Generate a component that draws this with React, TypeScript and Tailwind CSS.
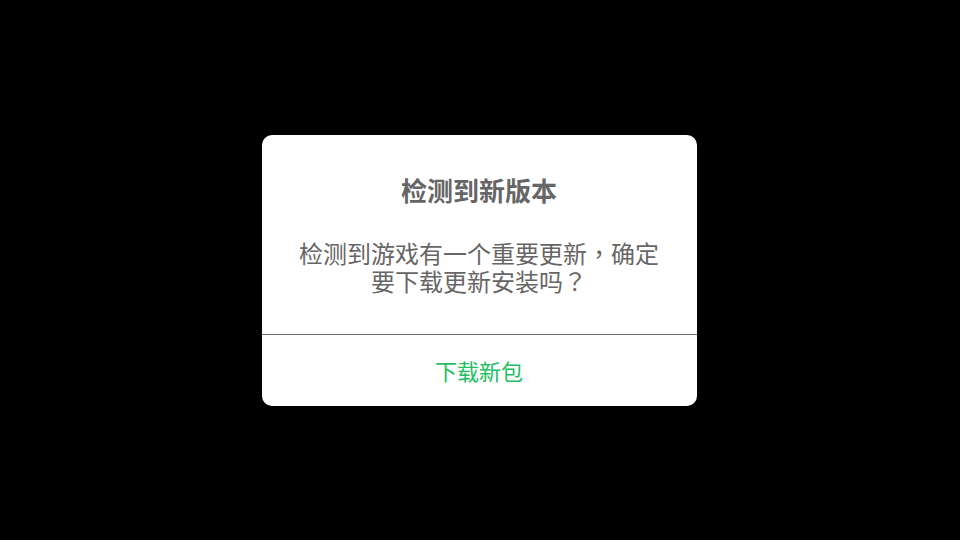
import React from 'react';

export default function App() {
  const punct = "font-['Noto_Sans_CJK_TC',sans-serif]";
  return (
    <div className="w-full h-screen bg-black flex items-center justify-center font-['Noto_Sans_CJK_SC',sans-serif]">
      <div className="w-[435px] -translate-x-px bg-white rounded-[10px] overflow-hidden flex flex-col">
        {/* Content */}
        <div className="px-9 pt-[39px] pb-[39px] flex flex-col items-center text-center text-[#666666]">
          <h2 className="text-[26px] leading-[32px] font-bold">检测到新版本</h2>
          <p className="mt-[33px] text-[24px] leading-[28px]">
            检测到游戏有一个重要更新<span className={punct}>，</span>确定要下载更新安装吗<span className={punct}>？</span>
          </p>
        </div>

        {/* Action */}
        <div className="border-t border-[#6b6b6b] h-[72px] flex items-center justify-center">
          <button className="text-[22px] leading-[28px] text-[#22c063]">下载新包</button>
        </div>
      </div>
    </div>
  );
}
